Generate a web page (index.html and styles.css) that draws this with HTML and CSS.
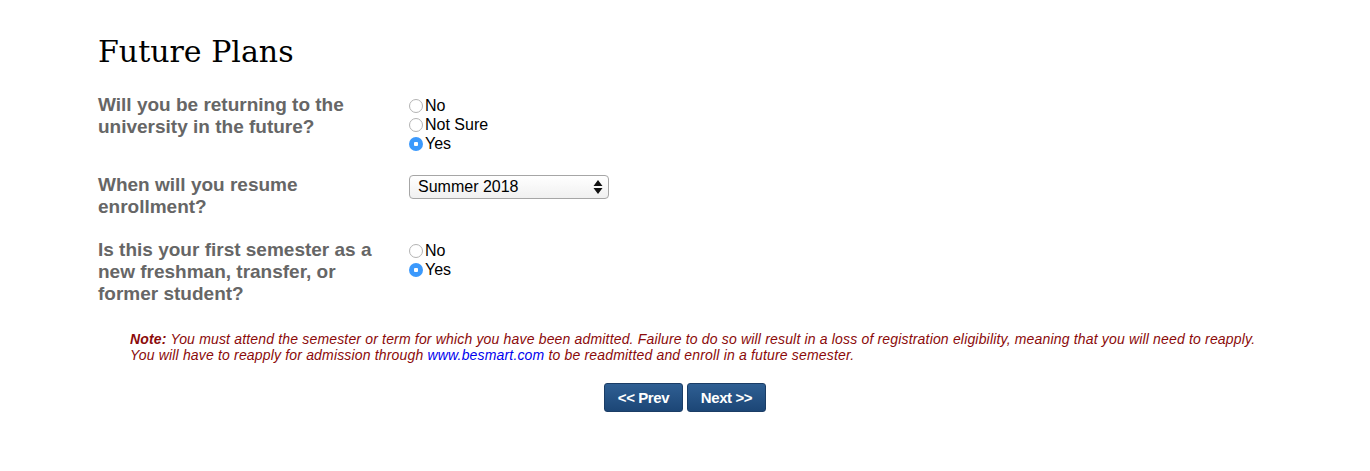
FILE: index.html
```html
<!DOCTYPE html>
<html>
<head>
<meta charset="utf-8">
<link rel="stylesheet" href="styles.css">
</head>
<body>
<div class="page">
  <h1 class="title">Future Plans</h1>
  <div class="form">
    <div class="row">
      <div class="label">Will you be returning to the university in the future?</div>
      <div class="field">
        <label class="opt"><input type="radio" name="q1"><span>No</span></label>
        <label class="opt"><input type="radio" name="q1"><span>Not Sure</span></label>
        <label class="opt"><input type="radio" name="q1" checked><span>Yes</span></label>
      </div>
    </div>
    <div class="row">
      <div class="label">When will you resume enrollment?</div>
      <div class="field">
        <div class="select"><span>Summer 2018</span>
          <svg class="arrows" width="10" height="16" viewBox="0 0 10 16"><path d="M5 1 L9.5 7 L0.5 7 Z M0.5 9 L9.5 9 L5 15 Z" fill="#111"/></svg>
        </div>
      </div>
    </div>
    <div class="row">
      <div class="label">Is this your first semester as a new freshman, transfer, or former student?</div>
      <div class="field">
        <label class="opt"><input type="radio" name="q3"><span>No</span></label>
        <label class="opt"><input type="radio" name="q3" checked><span>Yes</span></label>
      </div>
    </div>
  </div>
  <p class="note"><b>Note:</b> You must attend the semester or term for which you have been admitted. Failure to do so will result in a loss of registration eligibility, meaning that you will need to reapply.<br>You will have to reapply for admission through <a href="#">www.besmart.com</a> to be readmitted and enroll in a future semester.</p>
  <div class="buttons">
    <button class="btn">&lt;&lt; Prev</button>
    <button class="btn">Next &gt;&gt;</button>
  </div>
</div>
</body>
</html>
```
FILE: styles.css
```css
html, body { margin: 0; padding: 0; background: #fff; }
body { font-family: "Liberation Sans", Arial, sans-serif; }
.page { padding: 0 98px; }
.title {
  font-family: "DejaVu Serif", "Liberation Serif", serif;
  font-weight: normal;
  font-size: 30px;
  color: #000;
  margin: 0;
  padding-top: 32px;
  line-height: 40px;
}
.form { margin-top: 22px; display: flex; flex-direction: column; gap: 21px; }
.row { display: flex; align-items: flex-start; }
.label {
  width: 288px;
  padding-right: 22px;
  font-weight: bold;
  font-size: 19px;
  line-height: 22px;
  color: #666;
}
.field { display: flex; flex-direction: column; padding-top: 2px; }
.opt { display: flex; align-items: center; font-size: 16px; line-height: 19px; color: #000; }
.opt input {
  -webkit-appearance: none; appearance: none;
  width: 14px; height: 14px; margin: 0 2px 0 1px;
  border: 1px solid #b3b3b3; border-radius: 50%;
  background: #fff; box-sizing: border-box;
}
.opt input:checked {
  border: none;
  background: radial-gradient(circle, #fff 0 2px, #3b99fc 2.5px);
}
.select {
  width: 200px; height: 24px; box-sizing: border-box;
  border: 1px solid #a6a6a6; border-radius: 4px;
  background: linear-gradient(#fff, #f0f0f0);
  display: flex; align-items: center; justify-content: space-between;
  padding: 0 5px 0 8px; font-size: 16px; color: #000;
  margin-left: 1px; margin-top: -1px;
}
.note {
  margin: 26px 0 0 32px;
  font-style: italic;
  font-size: 14px;
  letter-spacing: 0.17px;
  line-height: 16px;
  color: #8b0a0a;
}
.note b { font-weight: bold; }
.note a { color: #0000ee; text-decoration: none; }
.buttons { display: flex; justify-content: center; gap: 4px; margin-top: 20px; }
.btn {
  font-family: "Liberation Sans", Arial, sans-serif;
  font-weight: bold; font-size: 15px; color: #fff;
  width: 79px; height: 29px; padding: 0;
  border: 1px solid #1b3d66; border-radius: 3px;
  background: linear-gradient(#2f5f93, #1c4676);
  letter-spacing: -0.4px;
}
```
